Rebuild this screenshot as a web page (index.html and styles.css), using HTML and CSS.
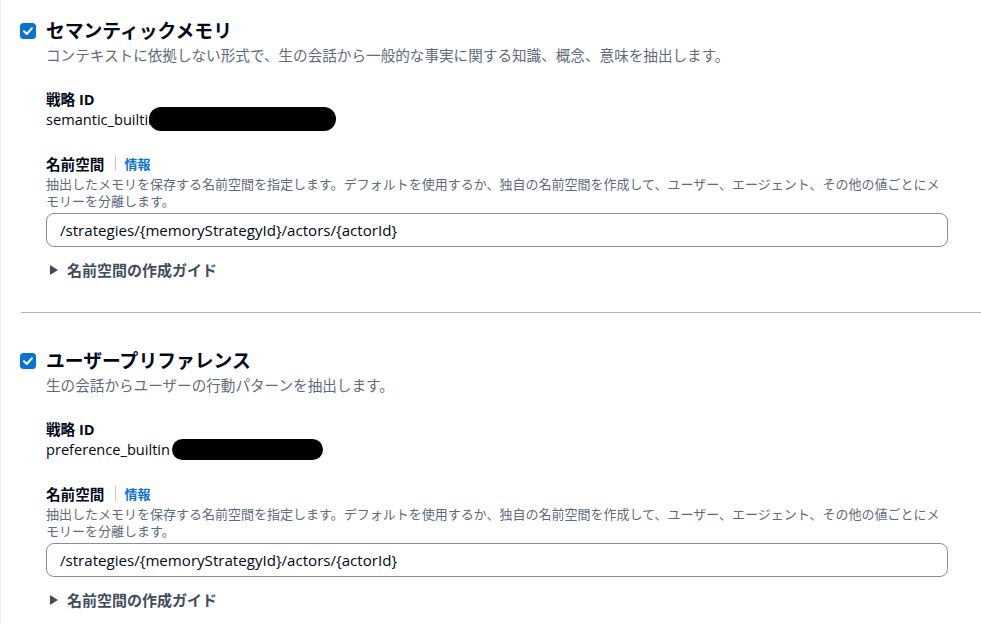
FILE: index.html
```html
<!DOCTYPE html>
<html lang="ja">
<head>
<meta charset="utf-8">
<link rel="stylesheet" href="styles.css">
</head>
<body>
<div class="page">
  <section class="strategy">
    <div class="head">
      <span class="checkbox"><svg viewBox="0 0 16 16" width="16" height="16"><rect x="0" y="0" width="16" height="16" rx="3.5" fill="#0972d3"/><path d="M4 8.3 L6.8 11 L12 5.2" fill="none" stroke="#fff" stroke-width="2" stroke-linecap="round" stroke-linejoin="round"/></svg></span>
      <h2 class="title">セマンティックメモリ</h2>
    </div>
    <div class="body">
      <p class="desc">コンテキストに依拠しない形式で、生の会話から一般的な事実に関する知識、概念、意味を抽出します。</p>
      <div class="field id-field">
        <div class="label">戦略 ID</div>
        <div class="value">semantic_builtin<span class="redact redact-1"></span></div>
      </div>
      <div class="field ns-field">
        <div class="label">名前空間<span class="sep"></span><a class="info">情報</a></div>
        <div class="hint">抽出したメモリを保存する名前空間を指定します。デフォルトを使用するか、独自の名前空間を作成して、ユーザー、エージェント、その他の値ごとにメモリーを分離します。</div>
        <div class="input">/strategies/{memoryStrategyId}/actors/{actorId}</div>
        <div class="expander"><span class="caret"></span>名前空間の作成ガイド</div>
      </div>
    </div>
  </section>
  <hr class="divider">
  <section class="strategy second">
    <div class="head">
      <span class="checkbox"><svg viewBox="0 0 16 16" width="16" height="16"><rect x="0" y="0" width="16" height="16" rx="3.5" fill="#0972d3"/><path d="M4 8.3 L6.8 11 L12 5.2" fill="none" stroke="#fff" stroke-width="2" stroke-linecap="round" stroke-linejoin="round"/></svg></span>
      <h2 class="title">ユーザープリファレンス</h2>
    </div>
    <div class="body">
      <p class="desc">生の会話からユーザーの行動パターンを抽出します。</p>
      <div class="field id-field">
        <div class="label">戦略 ID</div>
        <div class="value">preference_builtin<span class="redact redact-2"></span></div>
      </div>
      <div class="field ns-field">
        <div class="label">名前空間<span class="sep"></span><a class="info">情報</a></div>
        <div class="hint">抽出したメモリを保存する名前空間を指定します。デフォルトを使用するか、独自の名前空間を作成して、ユーザー、エージェント、その他の値ごとにメモリーを分離します。</div>
        <div class="input">/strategies/{memoryStrategyId}/actors/{actorId}</div>
        <div class="expander"><span class="caret"></span>名前空間の作成ガイド</div>
      </div>
    </div>
  </section>
</div>
</body>
</html>
```
FILE: styles.css
```css
html, body {
  margin: 0;
  padding: 0;
  background: #ffffff;
}
body {
  font-family: "Open Sans", "Noto Sans CJK JP", sans-serif;
  color: #000716;
  border-left: 1px solid #eceef0;
  min-height: 624px;
  box-sizing: border-box;
}
.page {
  padding: 18px 0 0 19px;
}
.strategy.second {
  padding-top: 35px;
}
.head {
  display: flex;
  align-items: center;
  gap: 10px;
}
.checkbox {
  display: flex;
  width: 16px;
  height: 16px;
  margin-top: 1px;
}
.title {
  margin: 0;
  font-size: 18.8px;
  line-height: 24px;
  font-weight: 700;
  color: #000716;
  font-family: "Noto Sans CJK JP", sans-serif;
}
.body {
  padding-left: 26px;
  padding-right: 33px;
}
.desc {
  margin: 3px 0 0;
  font-size: 14.6px;
  line-height: 20px;
  color: #5f6b7a;
  font-family: "Noto Sans CJK JP", sans-serif;
}
.id-field {
  margin-top: 24px;
}
.ns-field {
  margin-top: 24.5px;
}
.label {
  display: flex;
  align-items: center;
  height: 20px;
  font-size: 14.6px;
  line-height: 20px;
  font-weight: 700;
  color: #000716;
}
.sep {
  display: inline-block;
  width: 1px;
  height: 15px;
  background: #c6c6cd;
  margin: 0 8px 0 11px;
}
.info {
  color: #0972d3;
  font-weight: 700;
  font-size: 13px;
}
.value {
  font-size: 14.6px;
  line-height: 20px;
  height: 20px;
  color: #000716;
  display: flex;
  align-items: center;
}
.redact {
  display: inline-block;
  background: #000;
  border-radius: 12px;
  flex: none;
}
.redact-1 {
  width: 187px;
  height: 24px;
  margin: -2px 0 -2px -8px;
}
.redact-2 {
  width: 151px;
  height: 21px;
  margin: -1px 0 -1px 2px;
}
.hint {
  margin-top: 1px;
  font-size: 13px;
  line-height: 17px;
  color: #5f6b7a;
  font-family: "Noto Sans CJK JP", sans-serif;
}
.input {
  margin-top: 4.5px;
  height: 34px;
  box-sizing: border-box;
  border: 1px solid #8c8c94;
  border-radius: 8px;
  padding: 0 13px;
  display: flex;
  align-items: center;
  font-size: 15.1px;
  color: #000716;
}
.expander {
  margin-top: 13px;
  display: flex;
  align-items: center;
  height: 20px;
  font-size: 15px;
  line-height: 20px;
  font-weight: 700;
  color: #414d5c;
  font-family: "Noto Sans CJK JP", sans-serif;
}
.caret {
  display: inline-block;
  width: 0;
  height: 0;
  border-top: 5px solid transparent;
  border-bottom: 5px solid transparent;
  border-left: 8px solid #414d5c;
  margin: 0 9px 0 4px;
}
.divider {
  margin: 32px 0 0 1px;
  border: 0;
  border-top: 1px solid #b4b4bb;
  height: 0;
}
```
